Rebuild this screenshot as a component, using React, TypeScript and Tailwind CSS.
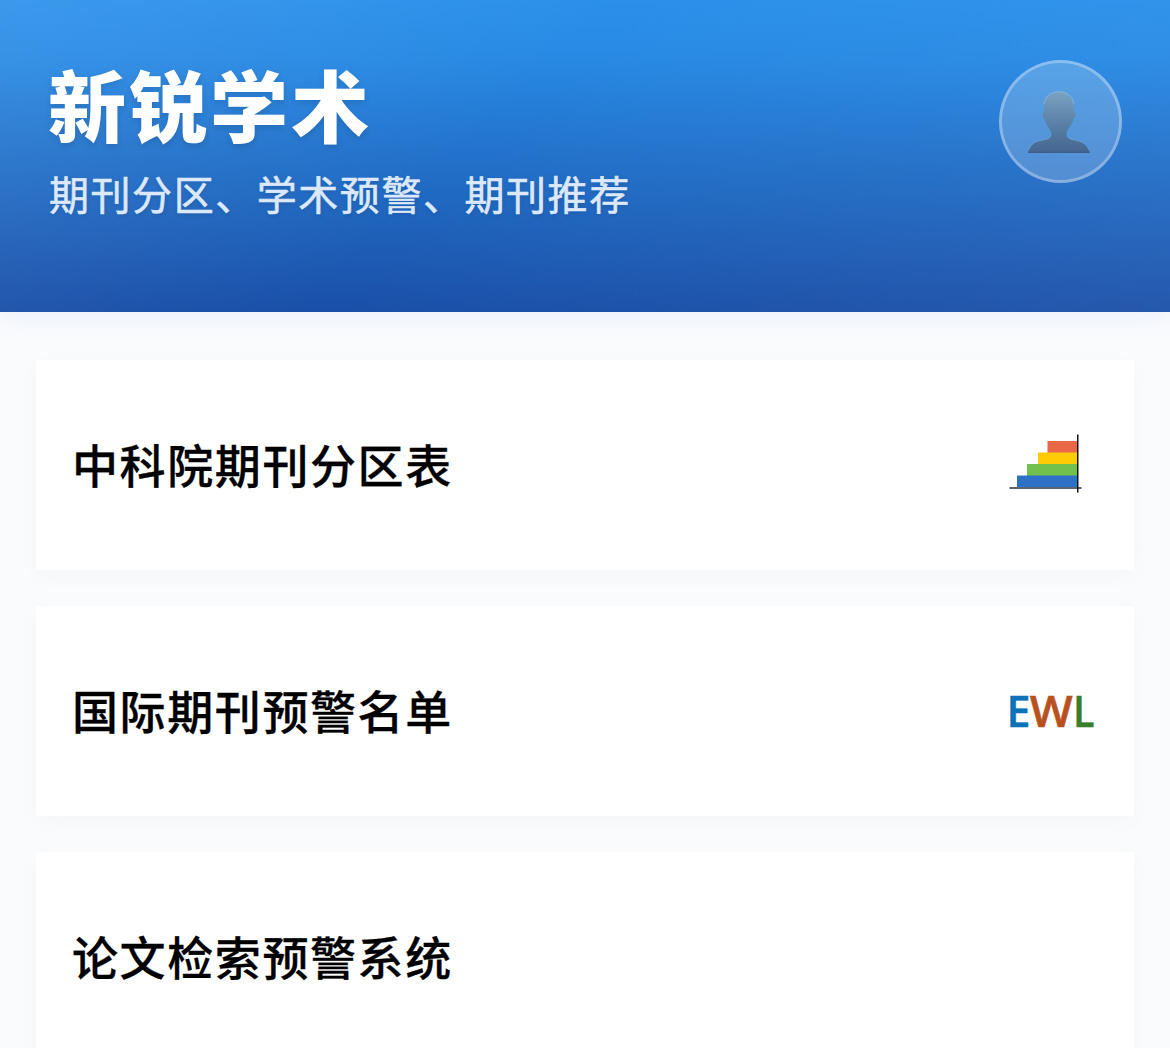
const cards = [
  { title: '中科院期刊分区表', icon: 'chart' },
  { title: '国际期刊预警名单', icon: 'ewl' },
  { title: '论文检索预警系统', icon: '' },
];

function ChartIcon() {
  return (
    <svg viewBox="0 0 110 90" className="h-[90px] w-[110px]">
      <rect x="47.5" y="21" width="30" height="12" fill="#ea6847" />
      <rect x="38" y="32.5" width="40" height="12" fill="#ffcb05" />
      <rect x="27" y="44" width="51" height="12" fill="#72c14c" />
      <rect x="17" y="55.5" width="61" height="12" fill="#2e72c8" />
      <rect x="9.500" y="67" width="72" height="2" fill="#5b6474" />
      <rect x="77" y="14.500" width="1.500" height="58" fill="#141414" />
    </svg>
  );
}

function EwlLogo() {
  return (
    <svg viewBox="0 0 110 60" className="h-[60px] w-[110px]">
      <g fontFamily="'Open Sans', sans-serif" fontWeight="600" fontSize="42.5" strokeWidth="0.5">
        <text x="6.500" y="45.500" fill="#0d72ba" stroke="#0d72ba" textLength="24" lengthAdjust="spacingAndGlyphs">E</text>
        <text x="29.800" y="45.500" fill="#b9511f" stroke="#b9511f" textLength="43" lengthAdjust="spacingAndGlyphs">W</text>
        <text x="73" y="45.500" fill="#3a7d2a" stroke="#3a7d2a" textLength="21.500" lengthAdjust="spacingAndGlyphs">L</text>
      </g>
    </svg>
  );
}

function Avatar() {
  return (
    <div className="flex h-[123px] w-[123px] items-center justify-center rounded-full border-[3px] border-white/30 bg-white/20">
      <svg viewBox="0 0 64 64" className="mr-[3px] h-16 w-16">
        <defs>
          <linearGradient id="person" x1="0" y1="0" x2="0" y2="1">
            <stop offset="0" stopColor="#7ba3c0" />
            <stop offset="0.5" stopColor="#5b82a8" />
            <stop offset="1" stopColor="#446690" />
          </linearGradient>
        </defs>
        <path
          d="M32 1.500C40.500 1.500 46.500 7 47 15.500C47.100 18 46.900 20 47.200 21.500C49 22.500 48.700 27 46.800 29C45.700 33.500 42.500 37 40.500 40.500C39.300 42.500 39 45 40.300 46.500C42.500 49.500 47 49.700 52 51C58 52.500 61.800 57 62.600 62.500H1.200C1.900 57 5.500 52.500 11.500 51C16.500 49.700 21.500 49.500 23.700 46.500C25 45 24.700 42.500 23.500 40.500C21.500 37 18.300 33.500 17.200 29C15.300 27 15 22.500 16.800 21.500C17.100 20 16.900 18 17 15.500C17.500 7 23.500 1.500 32 1.500Z"
          fill="url(#person)"
        />
        <path
          d="M17.200 14C18 6 24.500 1.700 32 1.700C39.500 1.700 46 6 46.800 14"
          fill="none"
          stroke="#8bbde4"
          strokeOpacity="0.7"
        />
        <path
          d="M1.500 60C3 56 6 52.300 11.500 51C16.500 49.700 21.500 49.500 23.700 46.500M40.300 46.500C42.500 49.500 47 49.700 52 51C57 52.300 60.500 56 62 60"
          fill="none"
          stroke="#79aee2"
          strokeOpacity="0.6"
        />
        <path d="M1.200 62.300H62.600" stroke="#3b587c" />
      </svg>
    </div>
  );
}

export default function App() {
  return (
    <div className="h-[1048px] overflow-hidden bg-[#fafbfd] font-['Noto_Sans_CJK_SC',sans-serif]">
      <header className="flex h-[312px] items-start justify-between bg-[linear-gradient(135deg,rgba(255,255,255,0.08)_0%,rgba(255,255,255,0)_42%,rgba(255,255,255,0.05)_100%),linear-gradient(180deg,#2b90ea_0%,#288ae4_18%,#2270c9_52%,#1a4fa8_100%)] pr-12 pl-12 shadow-[0_6px_24px_rgba(30,120,240,0.07)]">
        <div className="pt-[55px] text-white">
          <h1 className="text-[78px] leading-[96px] font-black tracking-[3px] [text-shadow:0_3px_6px_rgba(0,0,0,0.12)]">新锐学术</h1>
          <p className="mt-[12px] pl-px text-[40px] leading-[60px] tracking-[1.55px] text-[#dce8fb] [-webkit-text-stroke:0.6px_#dce8fb] [text-shadow:0_2px_4px_rgba(0,0,0,0.12)]">期刊分区、学术预警、期刊推荐</p>
        </div>
        <div className="pt-[60px]">
          <Avatar />
        </div>
      </header>
      <main className="flex flex-col gap-9 px-9 pt-12">
        {cards.map((card) => (
          <section
            key={card.title}
            className="flex h-[210px] shrink-0 items-center justify-between bg-white pr-6 pl-9 shadow-[0_6px_24px_rgba(0,0,0,0.025)]"
          >
            <h2 className="pb-[5px] text-[46px] leading-[60px] font-medium tracking-[1.6px] text-black [-webkit-text-stroke:0.3px_#000]">{card.title}</h2>
            {card.icon === 'chart' && <ChartIcon />}
            {card.icon === 'ewl' && <EwlLogo />}
          </section>
        ))}
      </main>
    </div>
  );
}
